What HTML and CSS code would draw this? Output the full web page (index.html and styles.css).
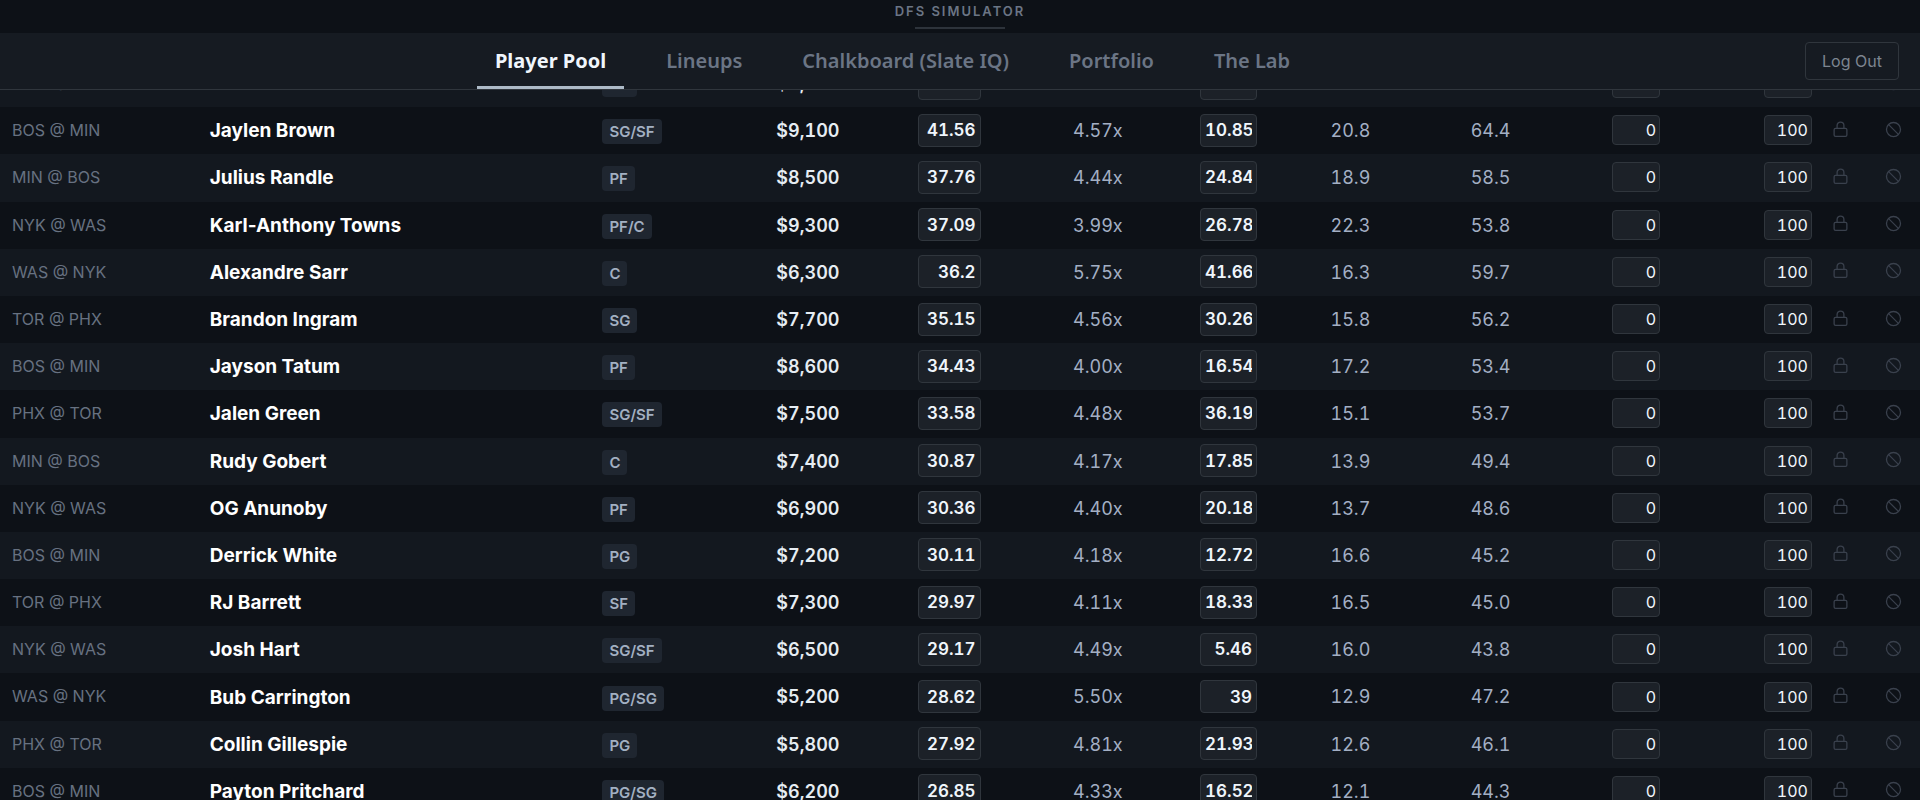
FILE: index.html
```html
<!DOCTYPE html>
<html lang="en">
<head>
<meta charset="utf-8">
<title>DFS Simulator</title>
<link rel="stylesheet" href="styles.css">
</head>
<body>
<header class="banner"><span class="banner-title">DFS SIMULATOR</span></header>
<nav class="nav">
  <div class="tabs">
    <button class="tab active">Player Pool</button>
    <button class="tab">Lineups</button>
    <button class="tab">Chalkboard (Slate IQ)</button>
    <button class="tab">Portfolio</button>
    <button class="tab">The Lab</button>
  </div>
  <button class="logout">Log Out</button>
</nav>
<svg class="sprite" aria-hidden="true">
  <symbol id="lock" viewBox="0 0 16 16"><rect x="2" y="7" width="12" height="7.5" rx="1.3"/><path d="M4.8 7V4.2a3.2 3.2 0 0 1 6.4 0V7"/></symbol>
  <symbol id="ban" viewBox="0 0 16 16"><circle cx="8" cy="8" r="6.6"/><path d="M3.4 3.4l9.2 9.2"/></symbol>
</svg>
<main class="pool">
  <table class="players">
    <colgroup><col class="c-game"><col class="c-name"><col class="c-pos"><col class="c-salary"><col class="c-proj"><col class="c-value"><col class="c-own"><col class="c-std"><col class="c-ceil"><col class="c-min"><col class="c-max"><col class="c-lock"><col class="c-ban"></colgroup>
    <tbody id="rows"></tbody>
  </table>
</main>
<script src="players.js"></script>
</body>
</html>
```
FILE: styles.css
```css
* { box-sizing: border-box; }
body {
  margin: 0;
  height: 100vh;
  display: flex;
  flex-direction: column;
  overflow: hidden;
  background: #0d1117;
  color: #e6edf3;
  font-family: Inter, "Liberation Sans", sans-serif;
  font-size: 16px;
}
button, input { font-family: inherit; }
.banner {
  display: flex;
  flex-direction: column;
  align-items: center;
  flex: none;
  padding-bottom: 4px;
}
.banner-title {
  padding: 2px 0 7px;
  line-height: 18px;
  font-size: 13px;
  font-weight: 600;
  letter-spacing: 2px;
  color: #6b7585;
}
.banner::after { content: ""; width: 90px; height: 2px; background: #2d333b; }
.nav {
  display: grid;
  grid-template-columns: minmax(0, 1fr) auto;
  align-items: center;
  flex: none;
  height: 57px;
  padding-right: 21px;
  background: #161b22;
  border-bottom: 1px solid #30363d;
}
.tabs {
  display: flex;
  justify-content: center;
  gap: 24px;
  height: 100%;
  padding-right: 20px;
}
.tab {
  padding: 1px 18px 0;
  border: 0;
  border-bottom: 3px solid transparent;
  border-radius: 2px 2px 0 0;
  background: none;
  color: #6b7585;
  font-family: "Noto Sans", sans-serif;
  font-size: 20px;
  font-weight: 600;
}
.tab.active { color: #f0f6fc; border-bottom-color: #adbac7; font-weight: 700; }
.logout {
  width: 94px;
  height: 38px;
  border: 1px solid #30363d;
  border-radius: 4px;
  background: none;
  color: #7d8590;
  font-size: 16px;
}
.sprite { position: absolute; width: 0; height: 0; }
.pool { flex: 1; min-height: 0; overflow: hidden; }
.players {
  width: 100%;
  margin-top: -30px;
  table-layout: fixed;
  border-collapse: collapse;
  line-height: 1.45;
}
.c-game { width: 10.3%; }
.c-name { width: 20.45%; }
.c-pos { width: 6%; }
.c-salary { width: 7.6%; }
.c-proj { width: 7.35%; }
.c-value { width: 7.4%; }
.c-own { width: 7%; }
.c-std { width: 5.9%; }
.c-ceil { width: 7.3%; }
.c-min { width: 7.8%; }
.c-max { width: 7.9%; }
.c-lock { width: 1.7%; }
.c-ban { width: 3.3%; }
td { padding: 0 12px; text-align: right; vertical-align: middle; white-space: nowrap; }
tr:nth-child(odd) { background: #13181f; }
.game, .name, .pos { text-align: left; }
.game { padding: 12px; color: #677181; }
.name { color: #fff; font-size: 19px; font-weight: 700; line-height: 23px; }
.pill {
  display: block;
  width: max-content;
  margin-top: 2px;
  padding: 0 7px;
  border-radius: 4px;
  background: #1f2630;
  color: #a3b0c2;
  font-size: 15px;
  font-weight: 600;
  line-height: 25px;
}
.salary, .num { padding-top: 1px; font-size: 18px; font-feature-settings: "tnum"; }
.salary { font-weight: 600; }
.num { color: #a3afc4; }
.field { padding-bottom: 1px; }
input {
  display: block;
  margin-left: auto;
  border: 1px solid #30363d;
  border-radius: 4px;
  background: #1c2128;
  color: #f0f6fc;
  text-align: right;
  font-feature-settings: "tnum";
}
.wide, .medium { height: 33px; padding: 0 4px; font-size: 17px; font-weight: 600; }
.wide { width: 63px; }
.medium { width: 57px; }
.small { width: 48px; height: 30px; padding: 0 3px; font-size: 16px; }
.icon { padding: 0 0 3px; }
.icon:last-child { padding-left: 10px; }
.icon button { display: block; margin: 0 auto; padding: 0; border: 0; background: none; }
.icon svg { display: block; width: 17px; height: 17px; fill: none; stroke: #3a414d; stroke-width: 1.2; }
```
FILE: players.js
```js
const players = [
  ["WAS @ NYK", "Jalen Brunson", "PG", "9,000", "42.10", "4.70x", "21.40", "19.7", "63.9"],
  ["BOS @ MIN", "Jaylen Brown", "SG/SF", "9,100", "41.56", "4.57x", "10.85", "20.8", "64.4"],
  ["MIN @ BOS", "Julius Randle", "PF", "8,500", "37.76", "4.44x", "24.84", "18.9", "58.5"],
  ["NYK @ WAS", "Karl-Anthony Towns", "PF/C", "9,300", "37.09", "3.99x", "26.78", "22.3", "53.8"],
  ["WAS @ NYK", "Alexandre Sarr", "C", "6,300", "36.2", "5.75x", "41.66", "16.3", "59.7"],
  ["TOR @ PHX", "Brandon Ingram", "SG", "7,700", "35.15", "4.56x", "30.26", "15.8", "56.2"],
  ["BOS @ MIN", "Jayson Tatum", "PF", "8,600", "34.43", "4.00x", "16.54", "17.2", "53.4"],
  ["PHX @ TOR", "Jalen Green", "SG/SF", "7,500", "33.58", "4.48x", "36.19", "15.1", "53.7"],
  ["MIN @ BOS", "Rudy Gobert", "C", "7,400", "30.87", "4.17x", "17.85", "13.9", "49.4"],
  ["NYK @ WAS", "OG Anunoby", "PF", "6,900", "30.36", "4.40x", "20.18", "13.7", "48.6"],
  ["BOS @ MIN", "Derrick White", "PG", "7,200", "30.11", "4.18x", "12.72", "16.6", "45.2"],
  ["TOR @ PHX", "RJ Barrett", "SF", "7,300", "29.97", "4.11x", "18.33", "16.5", "45.0"],
  ["NYK @ WAS", "Josh Hart", "SG/SF", "6,500", "29.17", "4.49x", "5.46", "16.0", "43.8"],
  ["WAS @ NYK", "Bub Carrington", "PG/SG", "5,200", "28.62", "5.50x", "39", "12.9", "47.2"],
  ["PHX @ TOR", "Collin Gillespie", "PG", "5,800", "27.92", "4.81x", "21.93", "12.6", "46.1"],
  ["BOS @ MIN", "Payton Pritchard", "PG/SG", "6,200", "26.85", "4.33x", "16.52", "12.1", "44.3"]
];

const field = (size, label, value) => `<td class="field"><input class="${size}" aria-label="${label}" value="${value}"></td>`;
const icon = (id, label) => `<td class="icon"><button aria-label="${label}"><svg><use href="#${id}"/></svg></button></td>`;

document.getElementById("rows").innerHTML = players.map(([game, name, pos, salary, proj, value, own, std, ceil]) => `<tr>
  <td class="game">${game}</td>
  <td class="name">${name}</td>
  <td class="pos"><span class="pill">${pos}</span></td>
  <td class="salary">$${salary}</td>
  ${field("wide", name + " projection", proj)}
  <td class="num">${value}</td>
  ${field("medium", name + " ownership", own)}
  <td class="num">${std}</td>
  <td class="num">${ceil}</td>
  ${field("small", name + " minimum exposure", 0)}
  ${field("small", name + " maximum exposure", 100)}
  ${icon("lock", "Lock " + name)}
  ${icon("ban", "Exclude " + name)}
</tr>`).join("");
```
